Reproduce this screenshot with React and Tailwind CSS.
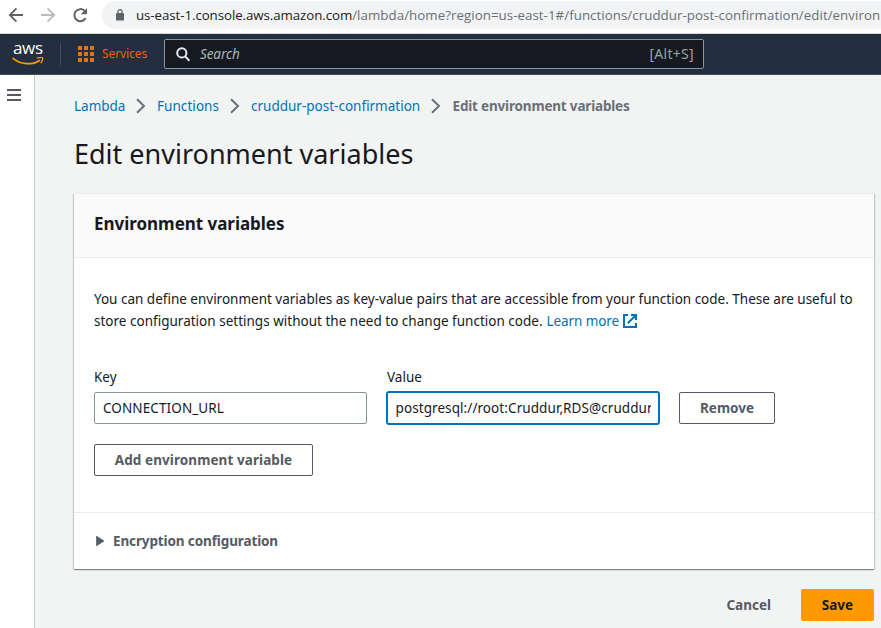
function BackArrow({ className }) {
  return (
    <svg className={className} width="16" height="16" viewBox="0 0 16 16" fill="none" stroke="currentColor" strokeWidth="1.8">
      <path d="M15 8H2.2M8.4 1.4L1.8 8l6.6 6.6" />
    </svg>
  );
}

function BrowserBar() {
  return (
    <div className="flex h-[33px] shrink-0 bg-white font-['Open_Sans',sans-serif]">
      <div className="flex w-[102px] shrink-0 items-start pt-[7px] pl-2">
        <BackArrow className="text-[#5f6368]" />
        <BackArrow className="ml-4 rotate-180 text-[#babcbe]" />
        <svg className="ml-4" width="17" height="16" viewBox="0 0 17 16">
          <path d="M13.6 11A6 6 0 1 1 12.6 3.9" fill="none" stroke="#5f6368" strokeWidth="2" />
          <path d="M15 1v6.3H8.7z" fill="#5f6368" />
        </svg>
      </div>
      <div className="mt-px flex h-7 grow items-center overflow-hidden rounded-l-full bg-[#f1f3f4] pl-3.5 text-[13.3px] whitespace-nowrap">
        <svg className="mr-3 shrink-0" width="8" height="12" viewBox="0 0 8 12">
          <rect x="0" y="4" width="8" height="7.5" rx="0.8" fill="#5f6368" />
          <path d="M1.9 4.5V2.8a2.1 2.1 0 0 1 4.2 0v1.7" fill="none" stroke="#5f6368" strokeWidth="1.2" />
        </svg>
        <span className="tracking-[-0.07px] text-[#202124]">us-east-1.console.aws.amazon.com</span>
        <span className="tracking-[0.05px] text-[#6b6f74]">
          /lambda/home?region=us-east-1#/functions/cruddur-post-confirmation/edit/environ
        </span>
      </div>
    </div>
  );
}

const gridCells = [0, 1, 2, 3, 4, 5, 6, 7, 8];

function ConsoleNav() {
  return (
    <header className="flex h-[42px] shrink-0 items-start border-t border-b border-t-[#d5dbdb] border-b-[#414d5c] bg-[#232f3e]">
      <div className="flex h-10 w-[60px] shrink-0 flex-col items-start pl-3">
        <span className="mt-[3px] h-[20px] pl-px font-['Open_Sans',sans-serif] text-[17px] leading-[21px] font-medium tracking-[-0.35px] text-white">aws</span>
        <svg width="32" height="9" viewBox="0 0 32 9" fill="none" stroke="#ff9900">
          <path d="M0.5 0.8C8 7.8 20.5 8.5 28 3.2" strokeWidth="1.7" />
          <path d="M24.8 1.2C27.5 0.5 30.3 0.3 30.6 1.1S29.8 4.6 28.8 6.2" strokeWidth="1.3" />
        </svg>
      </div>
      <div className="mt-[9px] h-[22px] w-px shrink-0 bg-[#414d5c]" />
      <svg className="mt-[12px] ml-[17px] shrink-0" width="16" height="16" viewBox="0 0 16 16" fill="#ec7211">
        {gridCells.map((n) => (
          <rect key={n} x={(n % 3) * 6} y={Math.floor(n / 3) * 6} width="4" height="4" rx="0.5" />
        ))}
      </svg>
      <span className="mt-[11px] ml-2 w-[62px] text-[12px] leading-[18px] tracking-[-0.08px] text-[#eb5f07]">Services</span>
      <div className="mt-[5px] flex h-[30px] w-[540px] items-center rounded-xs border border-[#879596] bg-[#16191f] pr-[9px] pl-[11px]">
        <svg width="14" height="15" viewBox="0 0 14 15" fill="none" stroke="#eaeded" strokeWidth="2">
          <circle cx="5.8" cy="5.9" r="4.6" />
          <path d="M9.2 9.4l4.2 4.4" />
        </svg>
        <span className="ml-2.5 grow text-[13.5px] tracking-[-0.1px] text-[#aab7b8] italic">Search</span>
        <span className="text-[14px] tracking-[0.3px] text-[#95a5a6]">[Alt+S]</span>
      </div>
    </header>
  );
}

function Chevron() {
  return (
    <svg className="shrink-0" width="10" height="16" viewBox="0 0 10 16" fill="none" stroke="#687078" strokeWidth="2">
      <path d="M1 1.2L8 8l-7 6.8" />
    </svg>
  );
}

function Breadcrumbs() {
  return (
    <nav className="flex h-[22px] items-center whitespace-nowrap text-[#0073bb]">
      <a className="w-[62px]">Lambda</a>
      <Chevron />
      <a className="ml-[11px] w-[73px] tracking-[0.06px]">Functions</a>
      <Chevron />
      <a className="ml-[11px] w-[180px]">cruddur-post-confirmation</a>
      <Chevron />
      <span className="ml-[11.5px] font-bold tracking-[-0.18px] text-[#687078]">Edit environment variables</span>
    </nav>
  );
}

export default function App() {
  return (
    <div className="flex h-[628px] w-[881px] flex-col overflow-hidden bg-[#f2f3f3] font-['Noto_Sans',sans-serif] text-[13.5px] leading-[22px] text-[#16191f]">
      <BrowserBar />
      <ConsoleNav />
      <div className="flex grow">
        <aside className="w-[35px] shrink-0 border-r border-[#c8cccc] bg-white pt-3.5 pl-[7px]">
          <svg width="14" height="12" viewBox="0 0 14 12" fill="#545b64">
            <path d="M0 0h14v2H0zM0 5h14v2H0zM0 10h14v2H0z" />
          </svg>
        </aside>
        <main className="w-[839px] pt-5 pl-[39px]">
          <Breadcrumbs />
          <h1 className="mt-[19px] text-[27px] leading-9">Edit environment variables</h1>
          <section className="mt-[21px] flex h-[376px] flex-col border-t border-[#eaeded] bg-white shadow-[0_1px_1px_0_rgba(0,28,36,0.3),1px_1px_1px_0_rgba(0,28,36,0.15),-1px_1px_1px_0_rgba(0,28,36,0.15)]">
            <div className="h-16 shrink-0 border-b border-[#eaeded] bg-[#fafafa] pt-[19px] pl-5">
              <h2 className="text-[17px] leading-[22px] font-bold tracking-[-0.03px]">Environment variables</h2>
            </div>
            <div className="px-5 pt-[30px] whitespace-nowrap">
              <p className="tracking-[-0.005px]">
                You can define environment variables as key-value pairs that are accessible from your function code. These are useful to
              </p>
              <p className="flex items-center">
                <span className="tracking-[0.01px]">store configuration settings without the need to change function code.</span>
                <a className="ml-1 tracking-[-0.1px] text-[#0073bb]">Learn more</a>
                <svg className="ml-1" width="14" height="14" viewBox="0 0 14 14" fill="none" stroke="#0073bb" strokeWidth="2">
                  <path d="M5 1H1v12h12V9M8 1h5v5M13 1L4.8 9.2" />
                </svg>
              </p>
              <div className="mt-[34px] flex items-end gap-[19px]">
                <label className="w-[273px]">
                  <span className="block">Key</span>
                  <div className="mt-1 flex h-8 items-center rounded-xs border border-[#879596] px-2 tracking-[0.1px]">CONNECTION_URL</div>
                </label>
                <label className="w-[274px]">
                  <span className="block pl-px">Value</span>
                  <div className="mt-[3px] -mb-px flex h-[34px] items-center rounded-[3px] border-2 border-[#0073bb] px-[7.5px]">
                    <div className="overflow-hidden tracking-[0.08px]">postgresql://root:Cruddur,RDS@cruddur</div>
                  </div>
                </label>
                <button className="h-8 w-24 rounded-xs border border-[#545b64] font-bold text-[#545b64]">Remove</button>
              </div>
              <button className="mt-5 h-8 w-[219px] rounded-xs border border-[#545b64] font-bold tracking-[0.08px] text-[#545b64]">
                Add environment variable
              </button>
            </div>
            <div className="mt-auto flex h-[57px] items-center border-t border-[#eaeded] pl-[22px] font-bold text-[#545b64]">
              <svg className="mr-[9px]" width="8" height="10" viewBox="0 0 8 10" fill="#545b64">
                <path d="M0.4 0L8 5 0.4 10z" stroke="#545b64" strokeWidth="0.6" />
              </svg>
              <span className="tracking-[-0.12px]">Encryption configuration</span>
            </div>
          </section>
          <div className="mt-5 flex justify-end font-bold">
            <button className="h-8 px-[30px] text-[#545b64]">Cancel</button>
            <button className="h-8 w-[73px] rounded-xs bg-[#ff9900] text-[#16191f]">Save</button>
          </div>
        </main>
      </div>
    </div>
  );
}
